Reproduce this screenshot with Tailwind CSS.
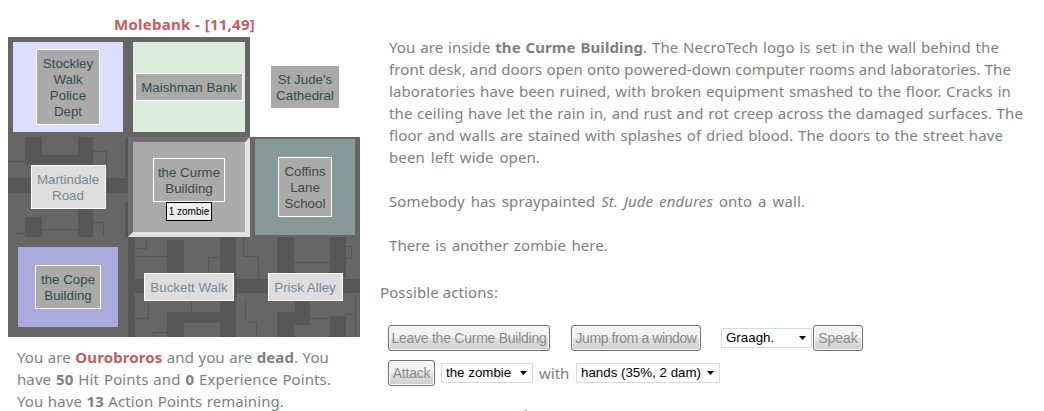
<!DOCTYPE html>
<html lang="en">
<head>
<meta charset="utf-8">
<title>Molebank</title>
<script src="https://cdn.jsdelivr.net/npm/@tailwindcss/browser@4"></script>
</head>
<body class="w-[1044px] h-[411px] overflow-hidden bg-white font-['Noto_Sans',sans-serif] text-[15px] leading-[22px] text-[#7d817d]">
<div class="flex">
  <section class="w-[360px] pl-2 pt-3 shrink-0">
    <h1 class="ml-[106px] w-[141px] h-[25px] leading-6 text-[15px] font-bold tracking-[0.25px] text-[#c45c60] whitespace-nowrap [text-align-last:justify]">Molebank - [11,49]</h1>
    <div class="relative w-[352px] h-[300px]">
      <svg class="absolute inset-0" width="352" height="300" viewBox="8 37 352 300" shape-rendering="crispEdges">
        <path fill="#666" d="M8 37h242v100h110v200H8z"/>
        <path fill="#575757" d="M25 137h17v18h36v-18h15v28H25zM8 178h120v15H8zM25 217h17v20H25zM78 209h15v28H78zM125 137h3v40h-3zM125 202h3v35h-3zM128 237h7v100h-7zM167 240h17v37h-17zM128 279h232v14H128zM167 312h53v-75h16v100h-16v-14h-36v14h-17zM277 237h17v41h-17zM330 237h16v41h-16zM295 293h15v32h-16v12h-17v-25h18zM330 316h16v21h-16z"/>
        <path fill="none" stroke="#565656" d="M8 161.500h17M93 151.500h13.500v14M42 229.500h36M93 222.500h10.500v14.500M15 233.500h10M135 256.500h32M135 248.500h11.500v-8M220 257.500h-11.500v15M148.500 300v18H135M153.500 337v-4.500H167M191.500 300v11M243.500 237v19.500h15V278M294 262.500h36M346 246.500h5.500v12H346M310 318.500h20M346 314.500h7.500M355.500 295v42M250 322.500h6.500v14.500M245 300v20"/>
      </svg>
      <div class="relative grid grid-cols-[120px_122px_110px] grid-rows-[100px_100px_100px] font-['Liberation_Sans',sans-serif] text-[13.33px] leading-4 text-center text-[#394b4b]">
        <div class="border-[5px] border-[#666] bg-[#ddf] flex items-center justify-center"><div class="w-16 h-[76px] border border-white bg-[#aaa] pt-1.5">Stockley<br>Walk<br>Police<br>Dept</div></div>
        <div class="border-[5px] border-[#666] bg-[#dbeedb] flex items-center justify-center"><div class="w-[108px] h-[28px] border border-white bg-[#aaa] pt-1.5 whitespace-nowrap">Maishman Bank</div></div>
        <div class="bg-white flex items-center justify-center"><div class="w-[68px] h-[42px] bg-[#aaa] pt-1.5">St Jude's<br>Cathedral</div></div>

        <div class="flex items-center justify-center"><div class="w-[75px] h-[44px] border border-white bg-[#ddd] text-[#778899] pt-1.5">Martindale<br>Road</div></div>
        <div class="border-[5px] border-t-[#707070] border-l-[#707070] border-r-[#e2e2e2] border-b-[#e2e2e2] bg-[#aaa] flex flex-col items-center pt-4"><div class="w-[72px] h-[44px] border border-white pt-1.5 shrink-0">the Curme<br>Building</div><div class="w-[46px] h-[19px] border border-black bg-[#eee] text-black text-[10px] leading-[17px] shrink-0 whitespace-nowrap">1 zombie</div></div>
        <div class="border-x-[5px] border-t-2 border-b-2 border-[#666] bg-[#899] flex items-center justify-center"><div class="w-[54px] h-[60px] border border-white bg-[#aaa] pt-1.5">Coffins<br>Lane<br>School</div></div>

        <div class="border-x-[10px] border-y-[10px] border-[#666] bg-[#aad] flex items-center justify-center"><div class="w-[66px] h-[44px] border border-white bg-[#aaa] pt-1.5">the Cope<br>Building</div></div>
        <div class="flex items-center justify-center"><div class="w-[90px] h-[28px] border border-white bg-[#ddd] text-[#778899] pt-1.5 whitespace-nowrap">Buckett Walk</div></div>
        <div class="flex items-center justify-center"><div class="w-[75px] h-[28px] border border-white bg-[#ddd] text-[#778899] pt-1.5 whitespace-nowrap">Prisk Alley</div></div>
      </div>
    </div>
    <div class="pt-[9px] pl-[9px] whitespace-nowrap [text-align-last:justify] tracking-[0.1px]">
      <p class="w-[312px]">You are <b class="text-[#c45c60]">Ourobroros</b> and you are <b>dead</b>. You</p>
      <p class="w-[314px]">have <b>50</b> Hit Points and <b>0</b> Experience Points.</p>
      <p class="w-[267px]">You have <b>13</b> Action Points remaining.</p>
    </div>
  </section>

  <main class="pl-5 pt-9 grow">
    <div class="pl-[9px] whitespace-nowrap [text-align-last:justify] tracking-[0.1px]">
      <p class="w-[610px]">You are inside <b>the Curme Building</b>. The NecroTech logo is set in the wall behind the</p>
      <p class="w-[622px]">front desk, and doors open onto powered-down computer rooms and laboratories. The</p>
      <p class="w-[622px]">laboratories have been ruined, with broken equipment smashed to the floor. Cracks in</p>
      <p class="w-[634px]">the ceiling have let the rain in, and rust and rot creep across the damaged surfaces. The</p>
      <p class="w-[614px]">floor and walls are stained with splashes of dried blood. The doors to the street have</p>
      <p class="w-[151px]">been left wide open.</p>
      <p class="w-[416px] mt-[22px]">Somebody has spraypainted <i>St. Jude endures</i> onto a wall.</p>
      <p class="w-[219px] mt-[22px]">There is another zombie here.</p>
    </div>
    <p class="w-[117px] mt-[25px] whitespace-nowrap [text-align-last:justify] tracking-[0.1px]">Possible actions:</p>

    <div class="mt-[22px] pl-2 flex items-center h-[26px] font-['Liberation_Sans',sans-serif] text-[14px] text-[#8a8a8a] whitespace-nowrap">
      <button class="w-[162px] h-[26px] rounded-[3px] border border-[#707070] bg-linear-to-b from-[#f3f3f3] from-50% via-[#e2e2e2] via-50% to-[#d0d0d0] shadow-[inset_0_0_0_1px_#fafafa] tracking-[-0.25px]">Leave the Curme Building</button>
      <button class="ml-[21px] w-[130px] h-[26px] rounded-[3px] border border-[#707070] bg-linear-to-b from-[#f3f3f3] from-50% via-[#e2e2e2] via-50% to-[#d0d0d0] shadow-[inset_0_0_0_1px_#fafafa] tracking-[-0.4px]">Jump from a window</button>
      <div class="ml-5 w-[91px] h-5 border border-[#d5dbe2] bg-white text-black text-[13.33px] flex items-center justify-between pl-1 pr-[5px]"><span>Graagh.</span><svg width="7" height="4"><path d="M0 0h7L3.500 4z"/></svg></div>
      <button class="ml-px w-[50px] h-[26px] rounded-[3px] border border-[#707070] bg-linear-to-b from-[#f3f3f3] from-50% via-[#e2e2e2] via-50% to-[#d0d0d0] shadow-[inset_0_0_0_1px_#fafafa]">Speak</button>
    </div>
    <div class="mt-[9px] pl-2 flex items-center h-[26px] font-['Liberation_Sans',sans-serif] text-[14px] text-[#8a8a8a] whitespace-nowrap">
      <button class="w-[47px] h-[26px] rounded-[3px] border border-[#707070] bg-linear-to-b from-[#f3f3f3] from-50% via-[#e2e2e2] via-50% to-[#d0d0d0] shadow-[inset_0_0_0_1px_#fafafa] tracking-[-0.2px]">Attack</button>
      <div class="ml-1.5 w-[92px] h-5 border border-[#d5dbe2] bg-white text-black text-[13.33px] flex items-center justify-between pl-1 pr-[5px]"><span>the zombie</span><svg width="7" height="4"><path d="M0 0h7L3.500 4z"/></svg></div>
      <span class="ml-1.5 w-[37px] font-['Noto_Sans',sans-serif] text-[15px] text-[#7d817d]">with</span>
      <div class="w-[144px] h-5 border border-[#d5dbe2] bg-white text-black text-[13.33px] flex items-center justify-between pl-1 pr-[5px]"><span>hands (35%, 2 dam)</span><svg width="7" height="4"><path d="M0 0h7L3.500 4z"/></svg></div>
    </div>
    <div class="mt-6 ml-[145px] w-0.5 h-px bg-[#a88]"></div>
  </main>
</div>
</body>
</html>
